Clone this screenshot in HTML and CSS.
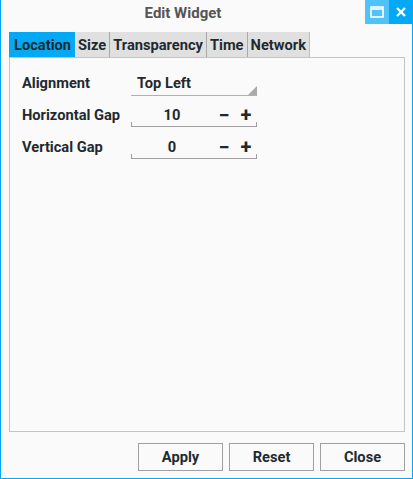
FILE: index.html
```html
<!DOCTYPE html>
<html lang="en">
<head>
    <meta charset="UTF-8">
    <title>Edit Widget</title>
    <link rel="stylesheet" href="styles.css">
</head>
<body>
    <div class="window">
        <div class="titlebar">
            <div class="title">Edit Widget</div>
            <div class="title-buttons">
                <button class="tb-button maximize">
                    <svg width="14" height="12" viewBox="0 0 14 12"><rect x="1" y="1" width="12" height="10" fill="none" stroke="#fff" stroke-width="1.6"/><line x1="1" y1="3" x2="13" y2="3" stroke="#fff" stroke-width="1.6"/></svg>
                </button>
                <button class="tb-button close">
                    <svg width="12" height="12" viewBox="0 0 12 12"><path d="M2 2 L10 10 M10 2 L2 10" stroke="#fff" stroke-width="2.4"/></svg>
                </button>
            </div>
        </div>
        <div class="content">
            <div class="tabs">
                <div class="tab active">Location</div>
                <div class="tab">Size</div>
                <div class="tab">Transparency</div>
                <div class="tab">Time</div>
                <div class="tab">Network</div>
            </div>
            <div class="panel">
                <div class="form">
                    <div class="label">Alignment</div>
                    <div class="combo">Top Left</div>

                    <div class="label">Horizontal Gap</div>
                    <div class="spin">
                        <span class="value">10</span>
                        <span class="step">&minus;</span>
                        <span class="step">+</span>
                    </div>

                    <div class="label">Vertical Gap</div>
                    <div class="spin">
                        <span class="value">0</span>
                        <span class="step">&minus;</span>
                        <span class="step">+</span>
                    </div>
                </div>
            </div>
            <div class="actions">
                <button class="btn">Apply</button>
                <button class="btn">Reset</button>
                <button class="btn">Close</button>
            </div>
        </div>
    </div>
</body>
</html>
```
FILE: styles.css
```css
:root {
    --accent: #03a9f4;
    --accent-light: #4fc3f7;
    --bg: #fafafa;
    --text: #1f2a30;
    --line: #9e9e9e;
}

* {
    box-sizing: border-box;
}

body {
    margin: 0;
    font-family: Roboto, "Liberation Sans", sans-serif;
    background: var(--bg);
}

.window {
    width: 413px;
    height: 479px;
    background: var(--bg);
    border: 1px solid var(--accent);
    border-top: none;
    display: flex;
    flex-direction: column;
}

.titlebar {
    height: 24px;
    display: flex;
}

.title {
    flex: 1;
    text-align: center;
    font-weight: bold;
    font-size: 15px;
    line-height: 26px;
    color: #555;
}

.title-buttons {
    display: flex;
}

.tb-button {
    width: 24px;
    height: 24px;
    border: none;
    padding: 0;
    margin: 0;
    display: flex;
    align-items: center;
    justify-content: center;
}

.tb-button.maximize {
    background: var(--accent-light);
}

.tb-button.close {
    background: var(--accent);
    width: 23px;
}

.content {
    flex: 1;
    display: flex;
    flex-direction: column;
    padding: 8px 7px 7px 8px;
}

.tabs {
    display: flex;
    height: 25px;
}

.tab {
    background: #e0e0e0;
    color: var(--text);
    font-weight: bold;
    font-size: 14.67px;
    line-height: 26px;
    padding: 0 3px 0 3px;
    border-right: 1px solid #a8a8a8;
}

.tab:last-child {
    border-right: 1px solid #bdbdbd;
}

.tab.active {
    background: var(--accent);
    border-right: none;
    padding: 0 4px 0 5px;
}

.panel {
    flex: 1;
    border: 1px solid #c4c4c4;
    padding: 8px 12px;
}

.form {
    display: grid;
    grid-template-columns: 109px 126px;
    grid-auto-rows: 32px;
    color: var(--text);
    font-weight: bold;
    font-size: 14.67px;
}

.label {
    display: flex;
    align-items: center;
    padding-top: 1px;
}

.combo {
    position: relative;
    display: flex;
    align-items: center;
    padding-left: 6px;
    padding-top: 1px;
    border-bottom: 1px solid #b0b0b0;
    margin-top: 4px;
    margin-bottom: 2px;
}

.combo::after {
    content: "";
    position: absolute;
    right: 0;
    bottom: 0;
    border-style: solid;
    border-width: 0 0 9px 9px;
    border-color: transparent transparent #aaa transparent;
}

.spin {
    position: relative;
    display: flex;
    align-items: center;
    border-bottom: 1px solid var(--line);
    margin-top: 4px;
    margin-bottom: 3px;
    padding-top: 1px;
}

.spin::before,
.spin::after {
    content: "";
    position: absolute;
    bottom: 0;
    width: 1px;
    height: 4px;
    background: var(--line);
}

.spin::before {
    left: 0;
}

.spin::after {
    right: 0;
}

.value {
    width: 82px;
    text-align: center;
}

.step {
    width: 22px;
    text-align: center;
    font-size: 20px;
    font-weight: bold;
}

.actions {
    display: flex;
    justify-content: flex-end;
    gap: 6px;
    padding-top: 11px;
}

.btn {
    width: 85px;
    height: 28px;
    background: var(--bg);
    border: 1px solid #a0a0a0;
    font-family: Roboto, "Liberation Sans", sans-serif;
    font-weight: bold;
    font-size: 14.67px;
    color: var(--text);
    padding: 0;
}
```
